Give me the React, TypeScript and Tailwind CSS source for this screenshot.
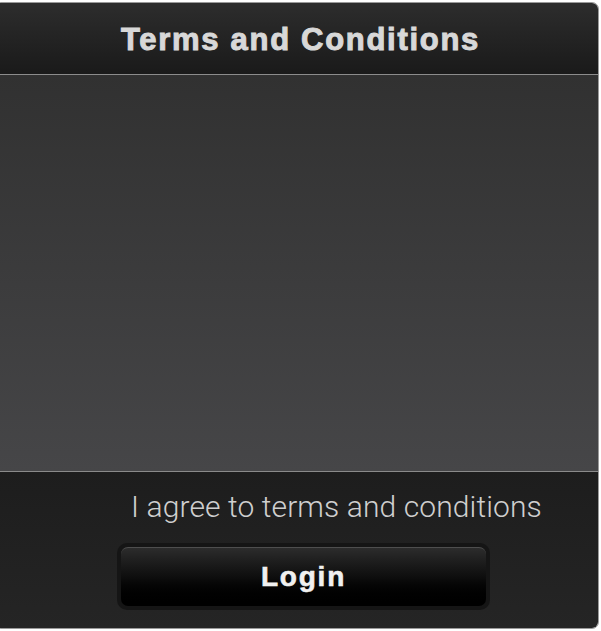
import React from "react";

export default function App() {
  return (
    <div className="w-[601px] h-[631px] bg-white overflow-hidden pt-[2px]">
      <div className="ml-[-6px] w-[605px] h-[627px] rounded-[7px] border border-[#9a9a9a] overflow-hidden flex flex-col">
        <div className="h-[72px] shrink-0 bg-gradient-to-b from-[#2d2d2d] to-[#1a1a1a] border-b border-[#8c8c8c] flex items-center justify-center pl-[8px] pt-[2px]">
          <span
            className="text-[31px] font-bold tracking-[1.7px] text-[#d8d8d8] leading-none [-webkit-text-stroke:1px_#d8d8d8]"
            style={{ fontFamily: '"Liberation Sans", Arial, sans-serif' }}
          >
            Terms and Conditions
          </span>
        </div>
        <div className="h-[397px] shrink-0 bg-gradient-to-b from-[#313131] to-[#464648] border-b border-[#8a8a8a]" />
        <div className="flex-1 bg-gradient-to-b from-[#1d1d1d] to-[#252525] flex flex-col">
          <div
            className="pl-[136px] pt-[15px] text-[30px] tracking-[0.1px] text-[#cfcfcf] leading-[40px] whitespace-nowrap"
            style={{ fontFamily: 'Roboto, "Liberation Sans", sans-serif', fontWeight: 300 }}
          >
            I agree to terms and conditions
          </div>
          <div className="ml-[122px] mt-[16px] w-[373px] h-[67px] rounded-[10px] bg-[#151515] p-[4px]">
            <div className="h-full rounded-[7px] bg-gradient-to-b from-[#2c2c2c] via-[#0e0e0e] to-[#000000] border-t border-[#4e4e4e] flex items-center justify-center">
              <span
                className="text-[28px] font-bold tracking-[1.8px] text-[#f0f0f0] leading-none [-webkit-text-stroke:0.6px_#f0f0f0]"
                style={{ fontFamily: '"Liberation Sans", Arial, sans-serif' }}
              >
                Login
              </span>
            </div>
          </div>
        </div>
      </div>
    </div>
  );
}
